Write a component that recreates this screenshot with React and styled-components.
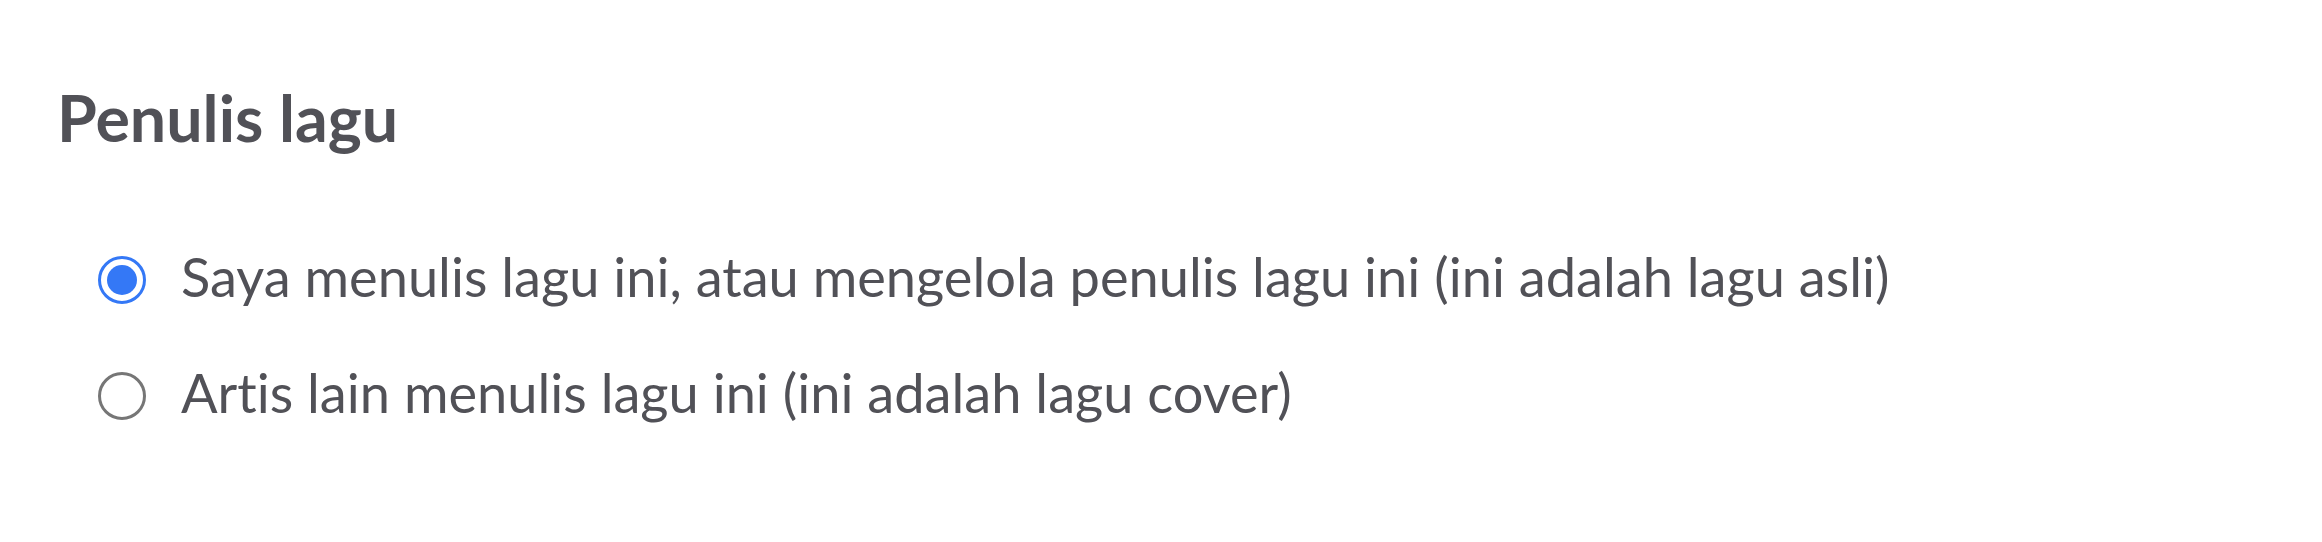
import React, { useState } from "react"
import styled, { createGlobalStyle } from "styled-components"

const GlobalStyle = createGlobalStyle`
  body {
    margin: 0;
    background: #ffffff;
    font-family: Lato, "Noto Sans", sans-serif;
    font-variant-ligatures: none;
  }
`

const options = [
  { id: "original", label: "Saya menulis lagu ini, atau mengelola penulis lagu ini (ini adalah lagu asli)" },
  { id: "cover", label: "Artis lain menulis lagu ini (ini adalah lagu cover)" },
]

function App() {
  const [selected, setSelected] = useState("original")

  return (
    <>
      <GlobalStyle />
      <Section>
        <Heading>Penulis lagu</Heading>
        <OptionList>
          {options.map((opt) => (
            <Option key={opt.id} onClick={() => setSelected(opt.id)}>
              <Radio $checked={selected === opt.id} />
              <Label>{opt.label}</Label>
            </Option>
          ))}
        </OptionList>
      </Section>
    </>
  )
}

const Section = styled.div`
  padding: 79px 0 0 57px;
  height: 542px;
  box-sizing: border-box;
`

const Heading = styled.h2`
  margin: 0;
  font-size: 64.5px;
  font-weight: 700;
  line-height: 1.2;
  color: #515157;
`

const OptionList = styled.div`
  display: flex;
  flex-direction: column;
  gap: 51px;
  margin-top: 88px;
  padding-left: 41px;
`

const Option = styled.label`
  display: flex;
  align-items: center;
  gap: 35px;
  cursor: pointer;
`

const Radio = styled.span`
  position: relative;
  flex: none;
  width: 48px;
  height: 48px;
  box-sizing: border-box;
  border-radius: 50%;
  border: 3px solid ${(p) => (p.$checked ? "#3478f6" : "#767676")};
  margin-top: 6px;

  &::after {
    content: "";
    position: absolute;
    inset: 6px;
    border-radius: 50%;
    background: #3478f6;
    display: ${(p) => (p.$checked ? "block" : "none")};
  }
`

const Label = styled.span`
  font-size: 54.2px;
  line-height: 1.2;
  color: #515157;
`

export default App
